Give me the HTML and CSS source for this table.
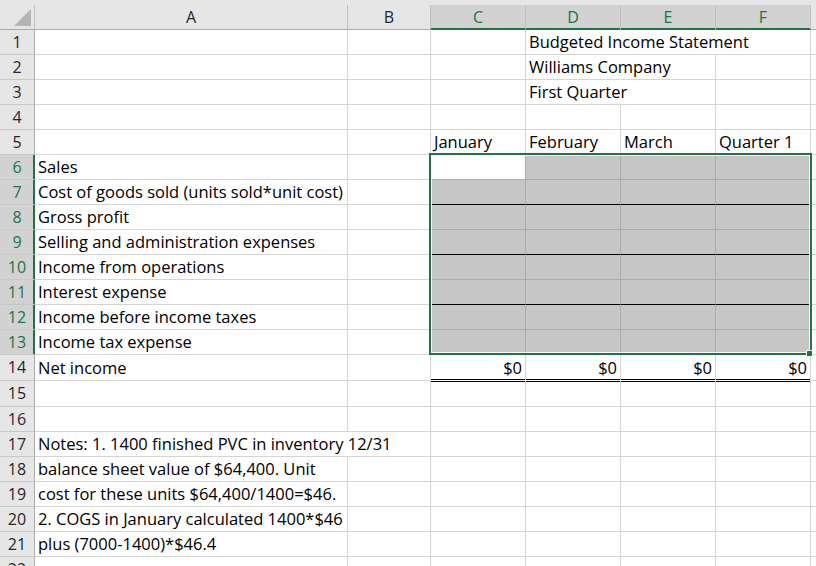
FILE: index.html
```html
<!DOCTYPE html>
<html>
<head>
<meta charset="utf-8">
<link rel="stylesheet" href="styles.css">
</head>
<body>
<div class="sheet">
  <div class="strip"></div>
  <div class="c ch corner"><svg class="tri" width="34" height="24" viewBox="0 0 34 24"><polygon points="31,4 31,21 14,21" fill="#b4b4b4"/></svg></div>
  <div class="c ch">A</div>
  <div class="c ch">B</div>
  <div class="c ch sel">C</div>
  <div class="c ch sel">D</div>
  <div class="c ch sel">E</div>
  <div class="c ch sel">F</div>
  <div class="c ch"></div>

  <div class="c rh">1</div><div class="c"></div><div class="c"></div><div class="c"></div><div class="c nr">Budgeted Income Statement</div><div class="c nr"></div><div class="c"></div><div class="c"></div>
  <div class="c rh">2</div><div class="c"></div><div class="c"></div><div class="c"></div><div class="c nr">Williams Company</div><div class="c"></div><div class="c"></div><div class="c"></div>
  <div class="c rh">3</div><div class="c"></div><div class="c"></div><div class="c"></div><div class="c nr">First Quarter</div><div class="c"></div><div class="c"></div><div class="c"></div>
  <div class="c rh">4</div><div class="c"></div><div class="c"></div><div class="c"></div><div class="c"></div><div class="c"></div><div class="c"></div><div class="c"></div>
  <div class="c rh">5</div><div class="c"></div><div class="c"></div><div class="c">January</div><div class="c">February</div><div class="c">March</div><div class="c">Quarter 1</div><div class="c"></div>

  <div class="c rh sel">6</div><div class="c">Sales</div><div class="c"></div><div class="c active"></div><div class="c g"></div><div class="c g"></div><div class="c g"></div><div class="c"></div>
  <div class="c rh sel">7</div><div class="c">Cost of goods sold (units sold*unit cost)</div><div class="c"></div><div class="c g bb"></div><div class="c g bb"></div><div class="c g bb"></div><div class="c g bb"></div><div class="c"></div>
  <div class="c rh sel">8</div><div class="c">Gross profit</div><div class="c"></div><div class="c g"></div><div class="c g"></div><div class="c g"></div><div class="c g"></div><div class="c"></div>
  <div class="c rh sel">9</div><div class="c">Selling and administration expenses</div><div class="c"></div><div class="c g bb"></div><div class="c g bb"></div><div class="c g bb"></div><div class="c g bb"></div><div class="c"></div>
  <div class="c rh sel">10</div><div class="c">Income from operations</div><div class="c"></div><div class="c g"></div><div class="c g"></div><div class="c g"></div><div class="c g"></div><div class="c"></div>
  <div class="c rh sel">11</div><div class="c">Interest expense</div><div class="c"></div><div class="c g bb"></div><div class="c g bb"></div><div class="c g bb"></div><div class="c g bb"></div><div class="c"></div>
  <div class="c rh sel">12</div><div class="c">Income before income taxes</div><div class="c"></div><div class="c g"></div><div class="c g"></div><div class="c g"></div><div class="c g"></div><div class="c"></div>
  <div class="c rh sel">13</div><div class="c">Income tax expense</div><div class="c"></div><div class="c g"></div><div class="c g"></div><div class="c g"></div><div class="c g"></div><div class="c"></div>

  <div class="c rh tall">14</div><div class="c tall">Net income</div><div class="c tall"></div><div class="c tall r dbl1">$0</div><div class="c tall r dbl1">$0</div><div class="c tall r dbl1">$0</div><div class="c tall r dbl1">$0</div><div class="c tall"></div>
  <div class="c rh tall">15</div><div class="c tall"></div><div class="c tall"></div><div class="c tall dbl2"></div><div class="c tall dbl2"></div><div class="c tall dbl2"></div><div class="c tall dbl2"></div><div class="c tall"></div>
  <div class="c rh">16</div><div class="c"></div><div class="c"></div><div class="c"></div><div class="c"></div><div class="c"></div><div class="c"></div><div class="c"></div>
  <div class="c rh">17</div><div class="c nr">Notes: 1. 1400 finished PVC in inventory 12/31</div><div class="c"></div><div class="c"></div><div class="c"></div><div class="c"></div><div class="c"></div><div class="c"></div>
  <div class="c rh">18</div><div class="c">balance sheet value of $64,400. Unit</div><div class="c"></div><div class="c"></div><div class="c"></div><div class="c"></div><div class="c"></div><div class="c"></div>
  <div class="c rh">19</div><div class="c">cost for these units $64,400/1400=$46.</div><div class="c"></div><div class="c"></div><div class="c"></div><div class="c"></div><div class="c"></div><div class="c"></div>
  <div class="c rh">20</div><div class="c">2. COGS in January calculated 1400*$46</div><div class="c"></div><div class="c"></div><div class="c"></div><div class="c"></div><div class="c"></div><div class="c"></div>
  <div class="c rh">21</div><div class="c">plus (7000-1400)*$46.4</div><div class="c"></div><div class="c"></div><div class="c"></div><div class="c"></div><div class="c"></div><div class="c"></div>
  <div class="c rh">22</div><div class="c"></div><div class="c"></div><div class="c"></div><div class="c"></div><div class="c"></div><div class="c"></div><div class="c"></div>

  <div class="selection"></div>
  <div class="handle"></div>
</div>
</body>
</html>
```

FILE: styles.css
```css
html, body {
  margin: 0;
  padding: 0;
  background: #ffffff;
  overflow: hidden;
}

body {
  font-family: "Open Sans", "Liberation Sans", sans-serif;
  font-size: 16.5px;
  color: #000000;
}

.sheet {
  position: relative;
  display: grid;
  grid-template-columns: 35px 313px 83px 95px 95px 95px 95px 1fr;
  grid-template-rows: 5px 25px repeat(13, 25px) 26px 26px repeat(7, 25px);
  width: 816px;
  height: 566px;
  overflow: hidden;
}

.strip {
  grid-column: 1 / -1;
  background: #e6e6e6;
}

.c {
  box-sizing: border-box;
  border-right: 1px solid #d4d4d4;
  border-bottom: 1px solid #d4d4d4;
  padding: 0 3px;
  line-height: 24px;
  white-space: nowrap;
  min-width: 0;
}

.tall {
  line-height: 25px;
}

.ch {
  background: #e6e6e6;
  text-align: center;
  font-size: 16px;
  border-right-color: #bfbfbf;
  border-bottom-color: #ababab;
  color: #262626;
}

.ch.sel {
  background: #d2d2d2;
  color: #217346;
  border-bottom-color: #217346;
  box-shadow: inset 0 -1px 0 #217346;
}

.corner {
  padding: 0;
}

.tri {
  display: block;
}

.rh {
  background: #e6e6e6;
  text-align: center;
  padding: 0;
  font-size: 16px;
  border-right-color: #ababab;
  border-bottom-color: #c8c8c8;
  color: #262626;
}

.rh.sel {
  background: #d2d2d2;
  color: #217346;
  border-right-color: #217346;
  box-shadow: inset -1px 0 0 #217346;
}

.nr {
  border-right-color: transparent;
}

.active {
  background: #ffffff;
  border-right-color: #ababab;
  border-bottom-color: #ababab;
}

.g {
  background: #c6c6c6;
  border-right-color: #ababab;
  border-bottom-color: #ababab;
}

.bb {
  border-bottom-color: #000000;
}

.r {
  text-align: right;
}

.dbl1 {
  border-bottom-color: #ffffff;
  box-shadow: inset 0 -1px 0 #000000;
}

.dbl2 {
  box-shadow: inset 0 1px 0 #000000;
}

.selection {
  position: absolute;
  left: 429px;
  top: 153px;
  width: 383px;
  height: 202px;
  box-sizing: border-box;
  border: 2px solid #217346;
  box-shadow: inset 0 0 0 1px #ffffff;
  pointer-events: none;
}

.handle {
  position: absolute;
  left: 806px;
  top: 350px;
  width: 5px;
  height: 5px;
  background: #217346;
  border: 1px solid #ffffff;
}
```
